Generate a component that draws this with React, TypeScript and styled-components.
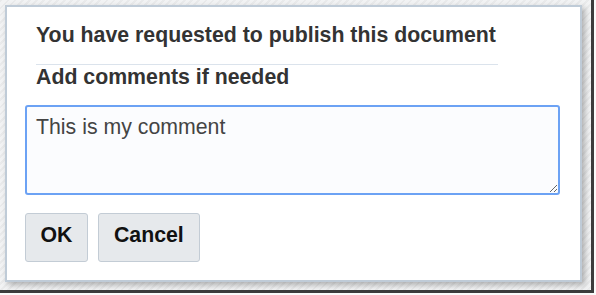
import styled, { createGlobalStyle } from "styled-components"

const GlobalStyle = createGlobalStyle`
  html, body {
    margin: 0;
    padding: 0;
    background: #ffffff;
  }
  body {
    font-family: "Liberation Sans", Arial, sans-serif;
  }
`

const Screen = styled.div`
  width: 596px;
  height: 295px;
  overflow: hidden;
  background: #fafafa;
`

const Backdrop = styled.div`
  box-sizing: border-box;
  width: 594px;
  height: 293px;
  padding: 5px 0 0 5px;

  background-color: #f2f3f4;
  background-image: repeating-linear-gradient(
    135deg,
    rgba(0, 0, 0, 0.035) 0 2px,
    transparent 2px 5px
  );
  border-right: 3px solid #3c3c3c;
  border-bottom: 3px solid #3c3c3c;
`

const Dialog = styled.div`
  box-sizing: border-box;
  width: 577px;
  height: 277px;
  padding: 16px 20px 18px 18px;

  display: flex;
  flex-direction: column;

  background: #ffffff;
  border: 2px solid #bfcbd7;
  box-shadow: 3px 3px 6px rgba(0, 0, 0, 0.28);
`

const Heading = styled.div`
  margin: 0 62px 0 11px;
  padding-bottom: 16px;
  border-bottom: 1px solid #dbe3ec;

  font-size: 21.3px;
  line-height: 25px;
  font-weight: bold;
  color: #333333;
`

const Label = styled.div`
  margin-left: 11px;
  font-size: 21.3px;
  line-height: 25px;
  font-weight: bold;
  color: #333333;
`

const Comment = styled.textarea`
  box-sizing: border-box;
  margin-top: 15px;
  width: 100%;
  height: 90px;
  padding: 8px 9px 6px;

  font-family: "Liberation Sans", Arial, sans-serif;
  font-size: 21.3px;
  line-height: 25px;
  color: #444444;

  background: #fbfcfe;
  border: 2px solid #6ca2f4;
  border-radius: 3px;
  outline: none;
  resize: vertical;
`

const ButtonRow = styled.div`
  margin-top: 18px;
  display: flex;
  gap: 10px;
`

const Button = styled.button`
  box-sizing: border-box;
  height: 49px;
  padding: 0 15px 5px;

  font-family: "Liberation Sans", Arial, sans-serif;
  font-size: 21.3px;
  line-height: 25px;
  font-weight: bold;
  color: #111111;

  background: #e6e9ec;
  border: 1.5px solid #c3ccd5;
  border-radius: 3px;
`

const OkButton = styled(Button)`
  padding: 0 14.5px 5px;
`

export default function App() {
  return (
    <>
      <GlobalStyle />
      <Screen>
        <Backdrop>
          <Dialog>
            <Heading>You have requested to publish this document</Heading>
            <Label>Add comments if needed</Label>
            <Comment defaultValue="This is my comment" />
            <ButtonRow>
              <OkButton>OK</OkButton>
              <Button>Cancel</Button>
            </ButtonRow>
          </Dialog>
        </Backdrop>
      </Screen>
    </>
  )
}
